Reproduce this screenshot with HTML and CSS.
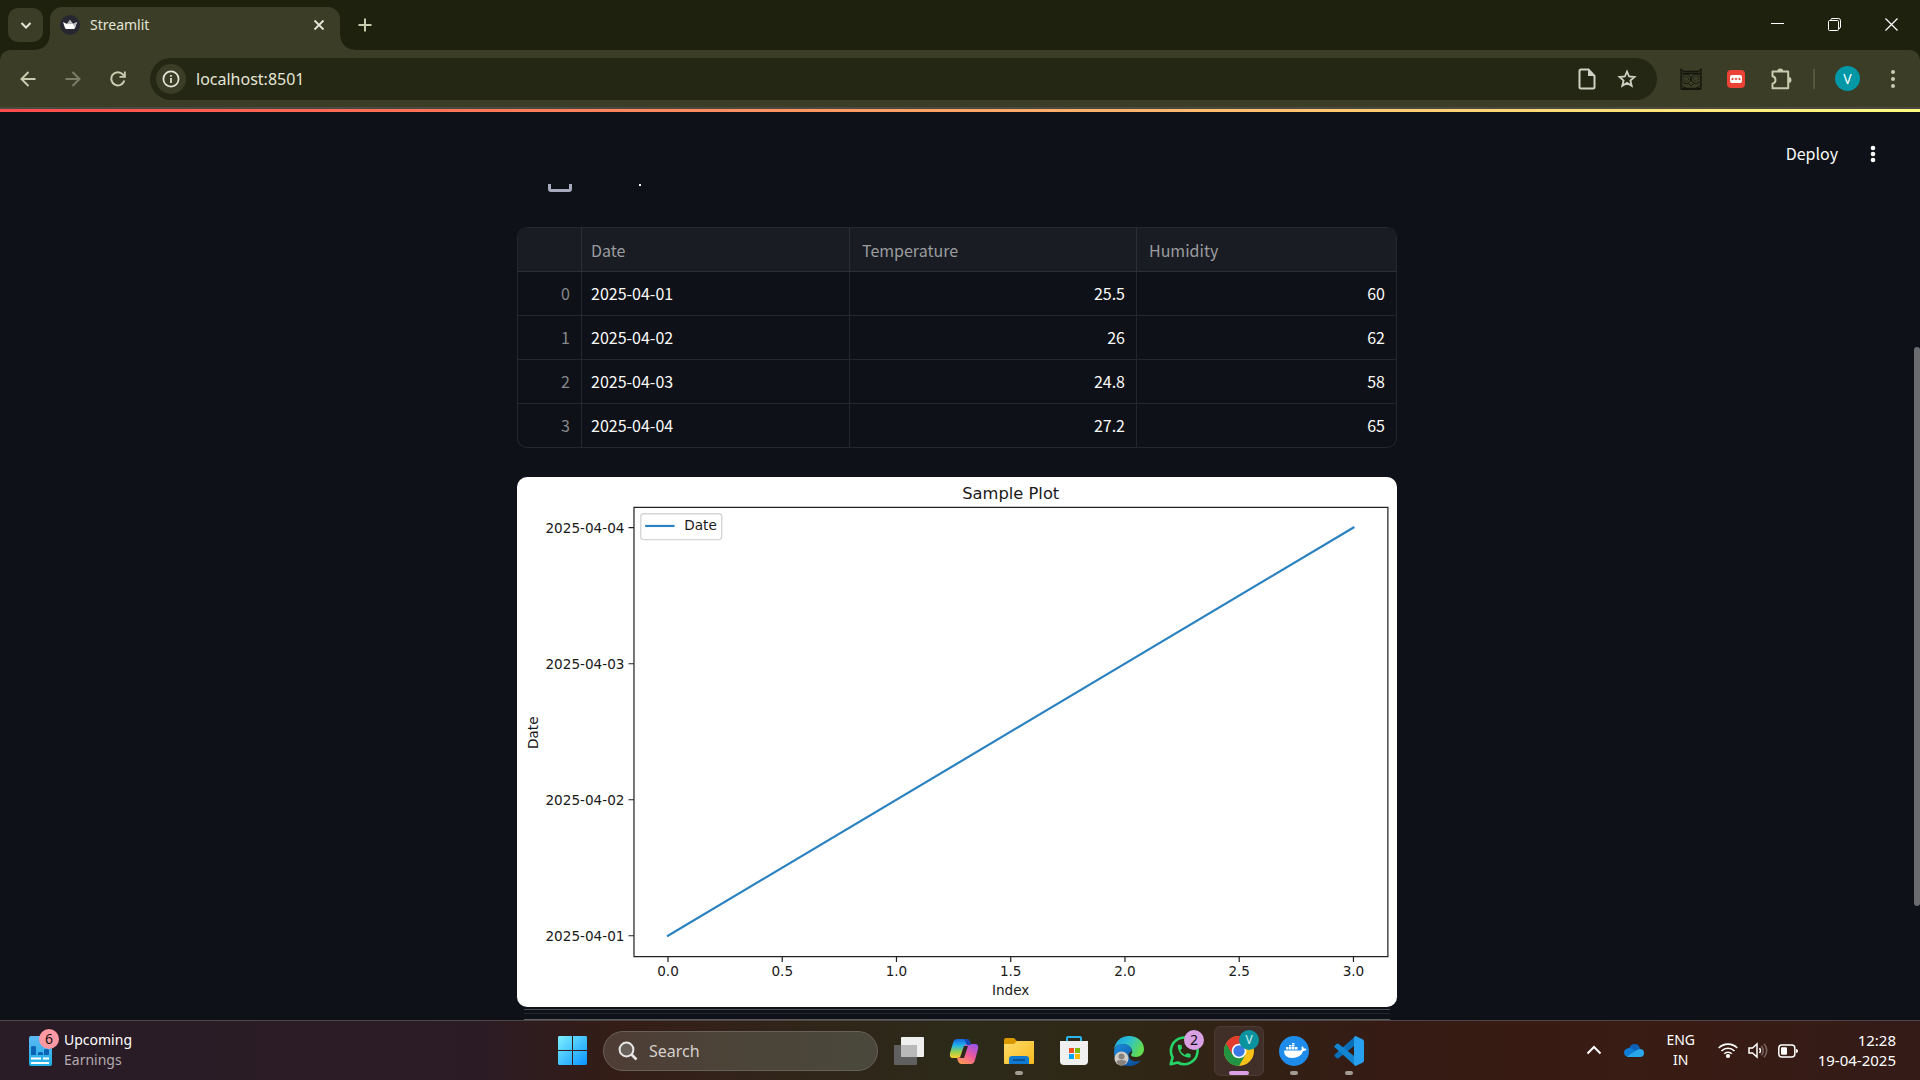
FILE: index.html
```html
<!DOCTYPE html>
<html lang="en">
<head>
<meta charset="utf-8">
<title>Streamlit</title>
<link rel="stylesheet" href="styles.css">
</head>
<body>
<header class="tab-strip">
  <button class="tab-search" aria-label="Search tabs"><svg width="12" height="12" viewBox="0 0 12 12"><path d="M1.500 4L6 8.500 10.500 4" fill="none" stroke="#e4e5d6" stroke-width="2"/></svg></button>
  <div class="tab">
    <svg width="20" height="20" viewBox="0 0 20 20"><circle cx="10" cy="10" r="10" fill="#262730"/><path d="M3 7l4 2 3-4 3 4 4-2-2 6q-.4 1-1.400 1H6.400Q5.400 14 5 13z" fill="#fff"/><path d="M10 5l3 4-6 0zM13 9l4-2-2 6z" fill="#b9b9bd"/></svg>
    <span class="tab-title">Streamlit</span>
    <button class="icon-btn tab-close" aria-label="Close tab"><svg width="12" height="12" viewBox="0 0 12 12"><path d="M1.500 1.500l9 9M10.500 1.500l-9 9" stroke="#e4e5d6" stroke-width="1.800"/></svg></button>
  </div>
  <button class="icon-btn new-tab" aria-label="New tab"><svg width="14" height="14" viewBox="0 0 14 14"><path d="M7 .5v13M.5 7h13" stroke="#c8cbad" stroke-width="2"/></svg></button>
  <div class="window-controls">
    <button class="icon-btn" aria-label="Minimize"><svg width="13" height="13" viewBox="0 0 13 13"><path d="M0 5.500h13" stroke="#fff"/></svg></button>
    <button class="icon-btn" aria-label="Restore"><svg width="13" height="13" viewBox="0 0 13 13"><path d="M3 2.500V1.500q0-1 1-1h6.500q2 0 2 2V9q0 1.500-2 1.500" fill="none" stroke="#fff"/><rect x=".5" y="2.500" width="10" height="10" rx="1" fill="none" stroke="#fff"/></svg></button>
    <button class="icon-btn" aria-label="Close"><svg width="13" height="13" viewBox="0 0 13 13"><path d="M.5.5l12 12M12.500.5l-12 12" stroke="#fff" stroke-width="1.200"/></svg></button>
  </div>
</header>
<nav class="toolbar">
  <button class="icon-btn" aria-label="Back"><svg width="16" height="16" viewBox="0 0 16 16"><path d="M15.500 8H2M8.500 1L1.500 8l7 7" fill="none" stroke="#c8cbad" stroke-width="2"/></svg></button>
  <button class="icon-btn" aria-label="Forward"><svg width="16" height="16" viewBox="0 0 16 16"><path d="M.5 8H14M7.500 1l7 7-7 7" fill="none" stroke="#7b7d66" stroke-width="2"/></svg></button>
  <button class="icon-btn" aria-label="Reload"><svg width="16" height="16" viewBox="0 0 16 16"><path d="M14.300 9.500A6.600 6.600 0 1 1 13 3.600L15 6" fill="none" stroke="#c8cbad" stroke-width="2"/><path d="M9.500 6.800h6.300V.4h-1.900v4.500H9.500z" fill="#c8cbad"/></svg></button>
  <div class="url-bar">
    <button class="site-info" aria-label="Site information"><svg width="18" height="18" viewBox="0 0 18 18"><circle cx="9" cy="9" r="7.600" fill="none" stroke="#e4e5d6" stroke-width="1.700"/><path d="M9 8v5M9 5v1.800" stroke="#e4e5d6" stroke-width="1.700"/></svg></button>
    <input class="url-input" aria-label="Address" value="localhost:8501">
    <button class="url-action" aria-label="Page"><svg width="18" height="22" viewBox="0 0 18 22"><path d="M3 1.500h7.500L16.500 8v11q0 1.500-1.500 1.500H3Q1.500 20.500 1.500 19V3Q1.500 1.500 3 1.500z" fill="none" stroke="#cfd0c4" stroke-width="2"/><path d="M10 1v7h7z" fill="#cfd0c4"/></svg></button>
    <button class="url-action" aria-label="Bookmark"><svg width="20" height="20" viewBox="0 0 20 20"><path d="M10 2.500l2.100 5 5.400.5-4.100 3.500 1.300 5.300-4.700-2.900-4.700 2.900 1.300-5.300L2.500 8l5.400-.5z" fill="none" stroke="#cfd0c4" stroke-width="1.800"/></svg></button>
  </div>
  <button class="icon-btn" aria-label="Owl extension"><svg width="22" height="22" viewBox="0 0 22 22" fill="none" stroke="#15170c"><path d="M1 .5v20q0 1 1 1h18q1 0 1-1V.5M1 1.500l3 2h14l3-2M1 5.500h20M2 20.500h18" stroke-width="1.300"/><circle cx="6" cy="11" r="4.700"/><circle cx="16" cy="11" r="4.700"/><circle cx="6" cy="11" r="2.500" stroke-dasharray="1 1"/><circle cx="16" cy="11" r="2.500" stroke-dasharray="1 1"/><path d="M8.500 15.500L11 18l2.500-2.500M1 16q2 4 5 4M21 16q-2 4-5 4"/></svg></button>
  <button class="icon-btn" aria-label="Red extension"><svg width="18" height="18" viewBox="0 0 18 18"><rect width="18" height="18" rx="4" fill="#ea4335"/><rect x="3" y="5" width="12" height="8" rx="2" fill="#fff"/><path d="M4 9l1.500-1.200L7 9l-1.500 1.200zM7.500 9L9 7.800 10.500 9 9 10.200zM11 9l1.500-1.200L14 9l-1.500 1.200z" fill="#ea4335"/></svg></button>
  <button class="icon-btn" aria-label="Extensions"><svg width="22" height="22" viewBox="0 0 22 22"><path d="M2.500 3.500h15.700v16.700H2.500v-4.500q3-.7 3-3.700t-3-3.700z" fill="none" stroke="#c8cbad" stroke-width="2" stroke-linejoin="round"/><path d="M7.300 3.500a3 3 0 0 1 6 0zM18.500 9a3 3 0 0 1 0 6z" fill="#c8cbad"/></svg></button>
  <span class="toolbar-divider"></span>
  <button class="icon-btn" aria-label="Profile"><span class="avatar">V</span></button>
  <button class="icon-btn" aria-label="Menu"><svg width="6" height="20" viewBox="0 0 6 20" fill="#c8cbad"><circle cx="3" cy="3" r="2"/><circle cx="3" cy="10" r="2"/><circle cx="3" cy="17" r="2"/></svg></button>
</nav>
<div class="viewport">
  <main class="app">
    <div class="app-header">
      <button class="deploy">Deploy</button>
      <button class="app-menu" aria-label="App menu"><svg width="6" height="18" viewBox="0 0 6 18" fill="#fafafa"><circle cx="3" cy="3" r="2.300"/><circle cx="3" cy="9" r="2.300"/><circle cx="3" cy="15" r="2.300"/></svg></button>
    </div>
    <div class="content">
      <div class="file-row">
        <svg width="120" height="9" viewBox="0 0 120 9"><path d="M1.500 0v5q0 1.500 1.500 1.500h18q1.500 0 1.500-1.500V0" fill="none" stroke="#a7a9bd" stroke-width="3"/><rect x="91" width="2" height="2" fill="#fafafa"/></svg>
      </div>
      <div class="table-frame">
        <table class="data">
          <colgroup><col class="c-index"><col class="c-date"><col class="c-temp"><col></colgroup>
          <thead><tr><th></th><th class="date">Date</th><th>Temperature</th><th>Humidity</th></tr></thead>
          <tbody>
            <tr><td class="index">0</td><td class="date">2025-04-01</td><td>25.5</td><td>60</td></tr>
            <tr><td class="index">1</td><td class="date">2025-04-02</td><td>26</td><td>62</td></tr>
            <tr><td class="index">2</td><td class="date">2025-04-03</td><td>24.8</td><td>58</td></tr>
            <tr><td class="index">3</td><td class="date">2025-04-04</td><td>27.2</td><td>65</td></tr>
          </tbody>
        </table>
      </div>
      <svg class="chart" viewBox="0 0 647 390" role="img" aria-label="Sample Plot">
        <text class="chart-title" x="363" y="16">Sample Plot</text>
        <path class="axis" d="M86 22.300H640.300V352.600H86zM111 352.600v4M195 352.600v4M279 352.600v4M363 352.600v4M447 352.600v4M531 352.600v4M615 352.600v4M86 37.200h-4M86 137.300h-4M86 237.300h-4M86 337.300h-4"/>
        <path class="series" d="M111 337.300L615 37.200"/>
        <g class="y-ticks"><text x="79" y="41">2025-04-04</text><text x="79" y="141">2025-04-03</text><text x="79" y="241">2025-04-02</text><text x="79" y="341">2025-04-01</text></g>
        <g class="x-ticks"><text x="111" y="367">0.0</text><text x="195" y="367">0.5</text><text x="279" y="367">1.0</text><text x="363" y="367">1.5</text><text x="447" y="367">2.0</text><text x="531" y="367">2.5</text><text x="615" y="367">3.0</text><text x="363" y="381">Index</text><text transform="translate(15.500 188) rotate(-90)">Date</text></g>
        <rect x="91" y="27" width="59.500" height="19" rx="2" fill="#fff" stroke="#d6d6d6"/>
        <path class="series" d="M95 36h20"/>
        <text x="123" y="39">Date</text>
      </svg>
      <div class="next-block"></div>
    </div>
  </main>
  <div class="scroll-gutter"><div class="scroll-thumb"></div></div>
</div>
<footer class="taskbar">
  <button class="widget">
    <span class="icon-wrap"><svg width="28" height="32" viewBox="0 0 28 32"><defs><linearGradient id="w" x2="0" y2="1"><stop stop-color="#5cb8f5"/><stop offset="1" stop-color="#1fb0e4"/></linearGradient></defs><rect x="3" y="1" width="23" height="30" rx="2" fill="url(#w)"/><path d="M5 12q0-1 2.500-1t2.500 1v8H5zM12 18q0-1 2.500-1t2.500 1v2h-5zM18 15q0-1 2.500-1t2.500 1v5h-5z" fill="#0b63b5"/><path d="M5 23.500h10M17 23.500h6M5 28h18" stroke="#fff" stroke-width="2"/></svg><span class="badge badge-pink">6</span></span>
    <span class="widget-text"><span>Upcoming</span><span class="dim">Earnings</span></span>
  </button>
  <div class="dock">
    <button class="tile" aria-label="Start"><svg width="30" height="30" viewBox="0 0 30 30"><defs><linearGradient id="s" x2="1" y2="1"><stop stop-color="#7df0ff"/><stop offset="1" stop-color="#0a94ff"/></linearGradient></defs><path d="M1 0h13v14H0V1zM15 0h13l1 1v13H15zM0 15h14v14H1l-1-1zM15 15h14v13l-1 1H15z" fill="url(#s)"/></svg></button>
    <label class="search"><svg width="20" height="20" viewBox="0 0 20 20"><circle cx="8.500" cy="8.500" r="6.900" fill="#67605a" stroke="#e8e6e4" stroke-width="2"/><path d="M13.500 13.500l5 5" stroke="#e8e6e4" stroke-width="2.600"/></svg><input placeholder="Search" aria-label="Search"></label>
    <button class="tile" aria-label="Task view"><svg width="30" height="30" viewBox="0 0 30 30"><rect y="9" width="23" height="20" rx="1" fill="#606060"/><rect x="7" y="1" width="23" height="20" rx="1" fill="#efefef"/><path d="M7 9h16v12H7z" fill="#b9b9b9"/></svg></button>
    <button class="tile" aria-label="Copilot"><svg width="30" height="30" viewBox="0 0 30 30"><defs><linearGradient id="c1" x2="0" y2="1"><stop stop-color="#1665e0"/><stop offset=".35" stop-color="#22b4e8"/><stop offset=".65" stop-color="#8fcf55"/><stop offset="1" stop-color="#ffcf2e"/></linearGradient><linearGradient id="c2" x1=".8" x2=".2" y2="1"><stop stop-color="#9a54e8"/><stop offset=".5" stop-color="#ee5a9c"/><stop offset="1" stop-color="#ff9b52"/></linearGradient></defs><path d="M8 3h10q2 0 3 3l1 4h-5q-2 0-3 3l-2 6q-1 3-4 3H4q-4 0-3-5L4 7q1-4 4-4z" fill="url(#c1)"/><path d="M22 28H12q-2 0-3-3l-1-3q3 0 4-3l3-9q1-2 4-2h7q4 0 3 5l-3 11q-1 4-4 4z" fill="url(#c2)"/><path d="M15 10h4l-4 12h-4z" fill="#2b281a"/><path d="M15 3h3q2 0 3 3l1 3h-4z" fill="#1347b6"/></svg></button>
    <button class="tile running" aria-label="File Explorer"><svg width="30" height="30" viewBox="0 0 30 30"><defs><linearGradient id="f" x2="1" y2="1"><stop stop-color="#ffdc6b"/><stop offset="1" stop-color="#f6b91c"/></linearGradient></defs><path d="M0 4q0-2 2-2h8l3 3H30v6H0z" fill="#d99800"/><path d="M0 8h10l3-3h17v22q0 1-1 1H1q-1 0-1-1z" fill="url(#f)"/><path d="M5 28v-5q0-3 3-3h14q3 0 3 3v5z" fill="#0f79d0"/><path d="M9 24h12" stroke="#083f78" stroke-width="1.300"/></svg></button>
    <button class="tile" aria-label="Microsoft Store"><svg width="30" height="30" viewBox="0 0 30 30"><path d="M8 6V2q0-1 1-1h12q1 0 1 1v4" fill="none" stroke="#2ab5f0" stroke-width="2"/><path d="M1 5h28v20q0 4-4 4H5q-4 0-4-4z" fill="#f0f0f0"/><path d="M10 12h5v5h-5z" fill="#f25022"/><path d="M16 12h5v5h-5z" fill="#7fba00"/><path d="M10 18h5v5h-5z" fill="#00a4ef"/><path d="M16 18h5v5h-5z" fill="#ffb900"/></svg></button>
    <button class="tile" aria-label="Edge"><svg width="30" height="30" viewBox="0 0 30 30"><defs><linearGradient id="e1" x2="1" y2=".4"><stop stop-color="#1c9fe0"/><stop offset=".5" stop-color="#2bbfd5"/><stop offset="1" stop-color="#62dc50"/></linearGradient><linearGradient id="e2" x2="1" y2="1"><stop stop-color="#1b8fe0"/><stop offset="1" stop-color="#0a4590"/></linearGradient></defs><path d="M0 15Q2 8 9 8q8 0 9 7l-3 2q-2 5 4 8 4 1 8-1-4 6-12 6Q0 30 0 15z" fill="url(#e2)"/><path d="M0 14C1 5 7 0 15 0c9 0 15 6 15 13 0 5-4 8-8 8-3 0-5-1-5-2 0-1 2-2 1-5-1-4-5-6-9-6Q2 8 0 14z" fill="url(#e1)"/><circle cx="7.500" cy="22.500" r="7" fill="#cfccc8"/><circle cx="7.500" cy="20.500" r="3" fill="#88827d"/><path d="M2.500 26q0-2 5-2t5 2q-2 3.500-5 3.500t-5-3.500z" fill="#88827d"/></svg></button>
    <button class="tile" aria-label="WhatsApp"><span class="icon-wrap"><svg width="30" height="30" viewBox="0 0 30 30"><path d="M1.700 28.300l1.900-7A13.300 13.300 0 1 1 8.800 26.500z" fill="none" stroke="#25d366" stroke-width="2.600" stroke-linejoin="round"/><path transform="translate(6.500 6.500) scale(.72)" d="M6.620 10.790c1.440 2.830 3.760 5.140 6.590 6.590l2.200-2.200c.27-.27.67-.36 1.020-.24 1.120.37 2.330.57 3.570.57.55 0 1 .45 1 1V20c0 .55-.45 1-1 1-9.390 0-17-7.610-17-17 0-.55.45-1 1-1h3.500c.55 0 1 .45 1 1 0 1.250.2 2.450.57 3.570.11.35.03.74-.25 1.020z" fill="#25d366"/></svg><span class="badge badge-violet">2</span></span></button>
    <button class="tile running active" aria-label="Chrome"><span class="icon-wrap"><svg width="30" height="30" viewBox="0 0 30 30"><circle cx="15" cy="15" r="15" fill="#fbc116"/><path d="M15 15L2 7.500A15 15 0 0 0 15 30l6.500-11.300z" fill="#229342"/><path d="M2 7.500A15 15 0 0 1 28 7.500H15L8.500 18.800z" fill="#e33b2e"/><circle cx="15" cy="15" r="7.300" fill="#fff"/><circle cx="15" cy="15" r="5.700" fill="#3b78e7"/></svg><span class="badge badge-teal">V</span></span></button>
    <button class="tile running" aria-label="Docker"><svg width="30" height="30" viewBox="0 0 30 30"><circle cx="15" cy="15" r="15" fill="#1d8cea"/><path d="M5 14.500h16q1.300 0 1.800-1-1-2 .4-3.600 1.500 1 1.600 2.600 1.700-.2 3 .4-.8 2-3.600 2.200Q22 22 13 22q-8 0-8-7.500z" fill="#fff"/><path d="M7 11h2.500v2.500H7zM10 11h2.500v2.500H10zM13 11h2.500v2.500H13zM16 11h2.500v2.500H16zM10 9h2.500v1.500H10zM13 9h2.500v1.500H13zM13 7h2.500v1.500H13z" fill="#fff"/></svg></button>
    <button class="tile running" aria-label="Visual Studio Code"><svg width="30" height="30" viewBox="0 0 30 30"><path d="M21.500 0L.8 18.600q-1 1 0 2l2 1.600q.8.600 1.700 0L22 8.500z" fill="#0b6fb8"/><path d="M21.500 30L.8 11.400q-1-1 0-2l2-1.600q.8-.6 1.700 0L22 21.500z" fill="#1384cf"/><path d="M21.500 0l7 3.200Q30 4 30 5.500v19q0 1.500-1.500 2.300l-7 3.200q-1.500-.5-1.500-2V2q0-1.500 1.500-2z" fill="#27a0f0"/></svg></button>
  </div>
  <div class="tray">
    <button class="tray-more" aria-label="Hidden icons"><svg width="16" height="20" viewBox="0 0 16 20"><path d="M1.500 12.500L8 6l6.500 6.500" fill="none" stroke="#fff" stroke-width="2"/></svg></button>
    <button aria-label="OneDrive"><svg width="20" height="20" viewBox="0 0 20 20"><path d="M5 8q1-5 6-5 4 0 5 5l-8 6z" fill="#0b62b8"/><path d="M4 16q-4-1-4-4.500T4.500 7q2-.3 4 1l8 5z" fill="#0f7bd6"/><path d="M3 15.500L13 9q1.500-1 3-1 4 0 4 4t-4 4H5q-1 0-2-.5z" fill="#28a8ea"/></svg></button>
    <button class="lang"><span>ENG</span><span>IN</span></button>
    <div class="status">
      <svg width="20" height="20" viewBox="0 0 20 20" fill="none" stroke="#fff" stroke-width="1.600"><path d="M.7 7a13 13 0 0 1 18.600 0M3.500 10a9.200 9.200 0 0 1 13 0M6.200 12.800a5.400 5.400 0 0 1 7.600 0"/><circle cx="10" cy="15" r="1.300" fill="#fff"/></svg>
      <svg width="20" height="20" viewBox="0 0 20 20" fill="none" stroke-width="1.500"><path d="M1 7h3.500L9 3v13l-4.500-4H1zM11.500 7q1.800 2.500 0 5" stroke="#fff"/><path d="M13.500 4.700q3.500 4.800 0 9.600M16 2.800q5.500 6.700 0 13.400" stroke="#7c645e"/></svg>
      <svg width="20" height="20" viewBox="0 0 20 20"><rect x=".8" y="4" width="16" height="12" rx="3" fill="none" stroke="#fff" stroke-width="1.500"/><rect x="3" y="6.200" width="6" height="7.600" rx="1" fill="#fff"/><path d="M18 8q2 0 2 2t-2 2z" fill="#fff"/></svg>
    </div>
    <button class="clock"><span>12:28</span><span>19-04-2025</span></button>
  </div>
</footer>
</body>
</html>
```
FILE: styles.css
```css
* { box-sizing: border-box; }
body { margin: 0; height: 100vh; display: flex; flex-direction: column; overflow: hidden; background: #1e210e; font-family: "Noto Sans", "Open Sans", sans-serif; color: #fff; }
button { margin: 0; padding: 0; border: 0; background: none; color: inherit; font: inherit; display: flex; align-items: center; justify-content: center; }
input { border: 0; padding: 0; background: none; outline: 0; font: inherit; color: inherit; min-width: 0; }
svg { display: block; flex: none; }

/* Tab strip */
.tab-strip { flex: none; height: 50px; display: flex; padding-left: 8px; background: #1e210e; }
.tab-search { width: 35px; height: 34px; margin: 8px 7px 0 0; border-radius: 10px; background: #3b3d27; }
.tab { position: relative; width: 290px; margin-top: 7px; padding: 0 9px 7px 10px; display: flex; align-items: center; gap: 10px; background: #3b3d27; border-radius: 12px 12px 0 0; }
.tab::before, .tab::after { content: ""; position: absolute; bottom: 0; width: 14px; height: 14px; }
.tab::before { right: 100%; background: radial-gradient(circle at 0 0, transparent 13px, #3b3d27 14px); }
.tab::after { left: 100%; background: radial-gradient(circle at 100% 0, transparent 13px, #3b3d27 14px); }
.tab-title { flex: 1; font-size: 14px; line-height: 20px; color: #e4e5d6; }
.tab-close { width: 24px; height: 24px; }
.new-tab { width: 49px; height: 50px; }
.window-controls { margin-left: auto; display: flex; }
.window-controls .icon-btn { width: 57px; height: 48px; }

/* Toolbar */
.toolbar { flex: none; height: 59px; padding: 0 5px; display: flex; align-items: center; background: #3b3d27; border-bottom: 2px solid #4a4a42; border-radius: 10px 10px 0 0; }
.toolbar > .icon-btn { flex: none; width: 45px; height: 45px; }
.url-bar { flex: 1; height: 42px; margin: 0 11px 0 10px; padding: 0 10px 0 6px; display: flex; align-items: center; border-radius: 21px; background: #242713; }
.site-info { width: 30px; height: 30px; border-radius: 50%; background: #3b3d27; }
.url-input { flex: 1; margin-left: 10px; font-size: 16px; line-height: 24px; color: #e4e5d6; }
.url-action { width: 40px; height: 40px; }
.toolbar-divider { width: 2px; height: 20px; margin: 0 10px; background: #55573d; }
.avatar { width: 25px; height: 25px; border-radius: 50%; background: #0097a7; font-size: 14px; line-height: 25px; text-align: center; }

/* Streamlit page */
.viewport { flex: 1; min-height: 0; display: flex; border-top: 3px solid; border-image: linear-gradient(90deg, #ff4b4b, #fffd80) 1; background: #0e1117; font-family: "Noto Sans CJK SC", "Noto Sans", sans-serif; font-size: 16px; line-height: 24px; color: #fafafa; }
.app { flex: 1; overflow: hidden; }
.app-header { height: 72px; padding: 26px 38px 0; display: flex; justify-content: flex-end; align-items: flex-start; }
.deploy { height: 32px; padding-bottom: 2px; }
.app-menu { width: 6px; height: 32px; margin-left: 32px; }
.content { width: 100%; max-width: 880px; margin: 0 auto; }
.file-row { height: 43px; padding-left: 31px; overflow: hidden; }
.table-frame { border: 1px solid #25272d; border-radius: 10px; overflow: hidden; }
.data { width: 100%; table-layout: fixed; border-collapse: separate; border-spacing: 0; }
.c-index { width: 64px; }
.c-date { width: 268px; }
.c-temp { width: 287px; }
.data th, .data td { height: 44px; padding: 0 11px 2px; border: solid #25272d; border-width: 0 1px 1px 0; text-align: right; font-weight: 400; }
.data th { padding: 0 12px; background: #1a1c23; border-color: #2c2f36; color: #9b9c9f; text-align: left; }
.data th.date, .data td.date { padding-left: 9px; text-align: left; }
.data td.index { color: #86888b; }
.data tr > :last-child { border-right: 0; }
.data tbody tr:last-child td { height: 43px; border-bottom: 0; }
.chart { width: 100%; margin-top: 29px; border-radius: 10px; background: #fff; font-family: "DejaVu Sans", sans-serif; font-size: 10px; fill: #1a1a1a; }
.chart-title { font-size: 12px; text-anchor: middle; }
.y-ticks { text-anchor: end; }
.x-ticks { text-anchor: middle; }
.axis { fill: none; stroke: #222; stroke-width: .9; }
.series { fill: none; stroke: #2a82c0; stroke-width: 1.600; stroke-linecap: square; }
.next-block { height: 11px; margin: 2px 7px 0; border-top: 1px solid #4a4c55; border-bottom: 1px solid #5c5e60; background: linear-gradient(#23262e, #23262e) 0 3px / 100% 1px no-repeat; }
.scroll-gutter { width: 6px; padding-top: 235px; }
.scroll-thumb { height: 559px; border-radius: 3px; background: #6b6c70; }

/* Taskbar */
.taskbar { flex: none; height: 60px; padding: 0 24px 0 26px; display: grid; grid-template-columns: 1fr auto 1fr; align-items: center; border-top: 1px solid #4d4546; background: linear-gradient(90deg, #291c26 0, #2b1b24 25%, #341d16 32%, #33221a 37%, #2c2a19 50%, #302616 60%, #351b14 72%, #391c13 85%, #341b18 100%); font-size: 14px; line-height: 20px; }
.widget { justify-self: start; gap: 10px; }
.icon-wrap { position: relative; display: block; }
.widget-text, .lang, .clock { display: flex; flex-direction: column; padding-bottom: 2px; text-align: left; }
.dim { color: #b3abaf; }
.badge { position: absolute; top: -6px; right: -5px; width: 20px; height: 20px; border-radius: 50%; line-height: 20px; text-align: center; color: #111; }
.badge-pink { background: #ff99a4; }
.badge-violet { background: #d9a0e4; }
.badge-teal { background: #0a939f; color: #cdeff0; font-size: 12px; }
.dock { display: flex; align-items: center; gap: 5px; }
.tile { position: relative; width: 50px; height: 50px; border-radius: 7px; }
.tile.running::after { content: ""; position: absolute; bottom: 1px; width: 8px; height: 4px; border-radius: 2px; background: #a39c95; }
.tile.active { background: #402f28; box-shadow: inset 0 0 0 1px #4b3b33; }
.tile.active::after { width: 20px; background: #d9a0e4; }
.search { width: 275px; height: 40px; margin-right: 1px; padding: 0 14px; display: flex; align-items: center; gap: 11px; border: 1px solid #68605a; border-radius: 20px; background: linear-gradient(90deg, #4e3d35, #4c4438 50%, #4a483c); font-size: 16px; }
.search input { flex: 1; }
.search input::placeholder { color: #d4d0cc; opacity: 1; }
.tray { justify-self: end; display: flex; align-items: center; gap: 20px; }
.tray-more { width: 20px; }
.lang { width: 34px; align-items: center; text-align: center; }
.status { display: flex; gap: 10px; }
.clock { align-items: flex-end; font-size: 15px; }
```
